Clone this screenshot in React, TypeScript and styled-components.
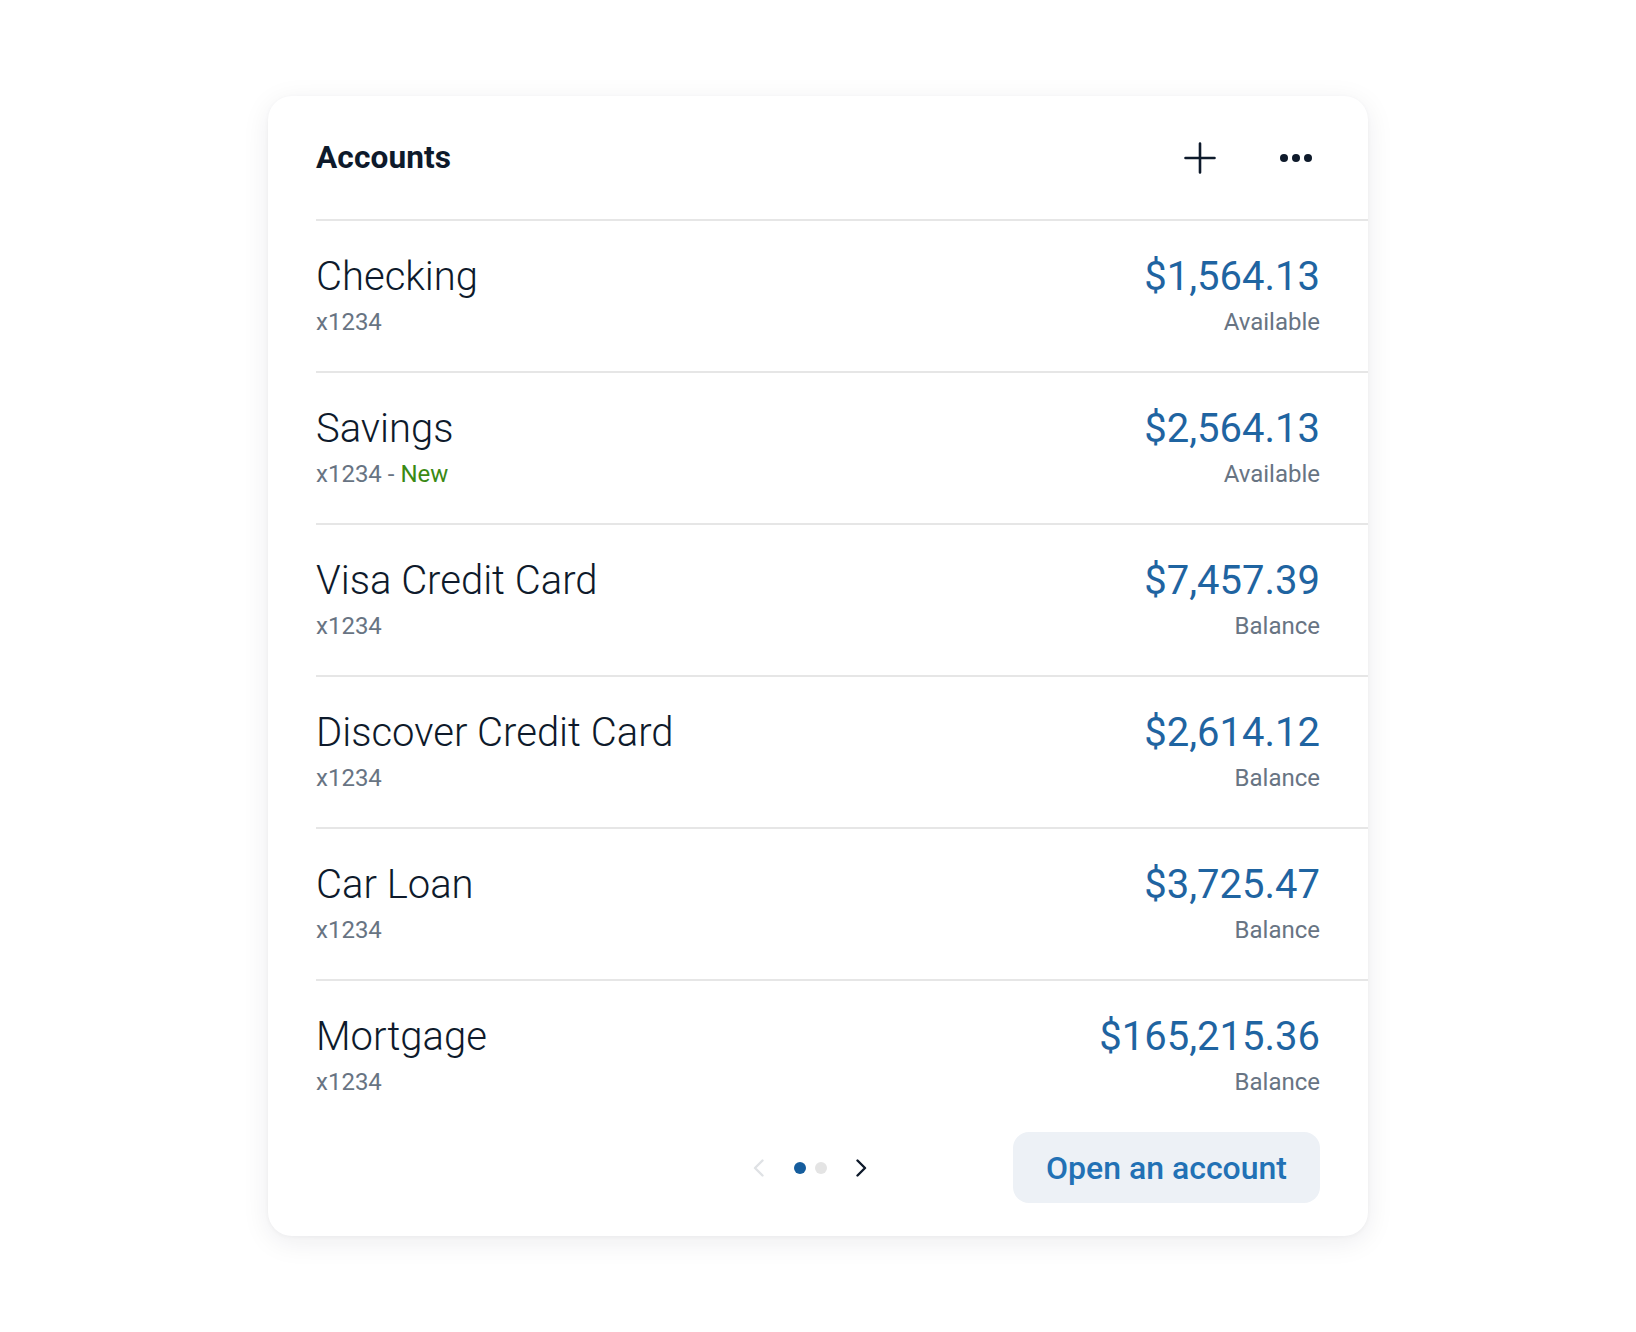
import styled, { createGlobalStyle } from "styled-components"

const GlobalStyle = createGlobalStyle`
    html, body {
        margin: 0;
        padding: 0;
        background: #ffffff;
    }
    body {
        font-family: Roboto, "Liberation Sans", Arial, sans-serif;
        color: #0e1a2b;
        -webkit-font-smoothing: antialiased;
    }
    * {
        box-sizing: border-box;
    }
`

const Page = styled.main`
    padding: 96px 0;
`

const Card = styled.section`
    width: 1100px;
    margin: 0 auto;
    padding-bottom: 33px;
    background: #ffffff;
    border-radius: 24px;
    box-shadow: 0 6px 28px rgba(20, 30, 45, 0.08), 0 1px 4px rgba(20, 30, 45, 0.04);
`

const Header = styled.header`
    display: flex;
    align-items: center;
    justify-content: space-between;
    height: 125px;
    margin-left: 48px;
    padding-right: 48px;
    border-bottom: 2px solid #e6e6e6;
`

const Title = styled.h2`
    margin: 0;
    font-size: 31.6px;
    font-weight: 700;
    color: #0e1a2b;
    letter-spacing: 0.1px;
`

const HeaderActions = styled.div`
    display: flex;
    align-items: center;
    gap: 48px;
`

const IconButton = styled.button`
    display: flex;
    align-items: center;
    justify-content: center;
    width: 48px;
    height: 48px;
    padding: 0;
    border: none;
    background: none;
    color: #0e1a2b;
    cursor: pointer;
`

const List = styled.ul`
    list-style: none;
    margin: 0;
    padding: 0;
`

const Row = styled.li<{ $first?: boolean; $last?: boolean }>`
    display: flex;
    justify-content: space-between;
    align-items: flex-start;
    margin-left: 48px;
    padding: 32px 48px ${(p) => (p.$last ? "34px" : "33px")} 0;
    border-top: ${(p) => (p.$first ? "none" : "2px solid #e6e6e6")};
`

const Side = styled.div<{ $align?: "left" | "right" }>`
    display: flex;
    flex-direction: column;
    gap: 5px;
    align-items: ${(p) => (p.$align === "right" ? "flex-end" : "flex-start")};
`

const Name = styled.div`
    font-size: 40px;
    line-height: 48px;
    font-weight: 300;
    color: #0e1a2b;
`

const Amount = styled.div`
    font-size: 40px;
    line-height: 48px;
    font-weight: 400;
    color: #1f64a1;
`

const Sub = styled.div`
    font-size: 24px;
    line-height: 32px;
    font-weight: 400;
    color: #687483;
`

const NewTag = styled.span`
    color: #3a8a14;
`

const Footer = styled.footer`
    display: grid;
    grid-template-columns: 1fr auto 1fr;
    align-items: center;
    margin: 0 48px;
`

const Pager = styled.nav`
    grid-column: 2;
    display: flex;
    align-items: center;
    padding-right: 16px;
`

const Chevron = styled.button`
    display: flex;
    align-items: center;
    justify-content: center;
    width: 11px;
    height: 18px;
    padding: 0;
    border: none;
    background: none;
    cursor: pointer;
`

const Dots = styled.div`
    display: flex;
    gap: 9px;
    margin: 0 29px 0 30px;
`

const Dot = styled.span<{ $active?: boolean }>`
    width: 12px;
    height: 12px;
    border-radius: 50%;
    background: ${(p) => (p.$active ? "#155d9d" : "#e4e4e4")};
`

const OpenButton = styled.button`
    grid-column: 3;
    justify-self: end;
    height: 71px;
    padding: 0 33px;
    border: none;
    border-radius: 16px;
    background: #edf1f6;
    font-family: Roboto, "Liberation Sans", Arial, sans-serif;
    font-size: 32px;
    font-weight: 500;
    color: #2271b5;
    cursor: pointer;
`

const PlusIcon = () => (
    <svg width="32" height="32" viewBox="0 0 32 32" fill="none">
        <path d="M16 1.5v29M1.5 16h29" stroke="currentColor" strokeWidth="2.6" strokeLinecap="round" />
    </svg>
)

const MoreIcon = () => (
    <svg width="32" height="8" viewBox="0 0 32 8" fill="currentColor">
        <circle cx="4" cy="4" r="4" />
        <circle cx="16" cy="4" r="4" />
        <circle cx="28" cy="4" r="4" />
    </svg>
)

const ChevronIcon = ({ dir, color }: { dir: "left" | "right"; color: string }) => (
    <svg width="11" height="18" viewBox="0 0 11 18" fill="none">
        <path
            d={dir === "left" ? "M9.5 1.5L2 9l7.5 7.5" : "M1.5 1.5L9 9l-7.5 7.5"}
            stroke={color}
            strokeWidth="2.4"
            strokeLinecap="round"
            strokeLinejoin="round"
        />
    </svg>
)

type Account = {
    name: string
    number: string
    amount: string
    label: string
    isNew?: boolean
}

const accounts: Account[] = [
    { name: "Checking", number: "x1234", amount: "$1,564.13", label: "Available" },
    { name: "Savings", number: "x1234", amount: "$2,564.13", label: "Available", isNew: true },
    { name: "Visa Credit Card", number: "x1234", amount: "$7,457.39", label: "Balance" },
    { name: "Discover Credit Card", number: "x1234", amount: "$2,614.12", label: "Balance" },
    { name: "Car Loan", number: "x1234", amount: "$3,725.47", label: "Balance" },
    { name: "Mortgage", number: "x1234", amount: "$165,215.36", label: "Balance" },
]

const App = () => {
    return (
        <>
            <GlobalStyle />
            <Page>
                <Card>
                    <Header>
                        <Title>Accounts</Title>
                        <HeaderActions>
                            <IconButton aria-label="Add account">
                                <PlusIcon />
                            </IconButton>
                            <IconButton aria-label="More options">
                                <MoreIcon />
                            </IconButton>
                        </HeaderActions>
                    </Header>

                    <List>
                        {accounts.map((a, i) => (
                            <Row key={a.name} $first={i === 0} $last={i === accounts.length - 1}>
                                <Side>
                                    <Name>{a.name}</Name>
                                    <Sub>
                                        {a.number}
                                        {a.isNew && (
                                            <>
                                                {" - "}
                                                <NewTag>New</NewTag>
                                            </>
                                        )}
                                    </Sub>
                                </Side>
                                <Side $align="right">
                                    <Amount>{a.amount}</Amount>
                                    <Sub>{a.label}</Sub>
                                </Side>
                            </Row>
                        ))}
                    </List>

                    <Footer>
                        <Pager>
                            <Chevron aria-label="Previous">
                                <ChevronIcon dir="left" color="#dfe2e5" />
                            </Chevron>
                            <Dots>
                                <Dot $active />
                                <Dot />
                            </Dots>
                            <Chevron aria-label="Next">
                                <ChevronIcon dir="right" color="#0e1a2b" />
                            </Chevron>
                        </Pager>
                        <OpenButton>Open an account</OpenButton>
                    </Footer>
                </Card>
            </Page>
        </>
    )
}

export default App
